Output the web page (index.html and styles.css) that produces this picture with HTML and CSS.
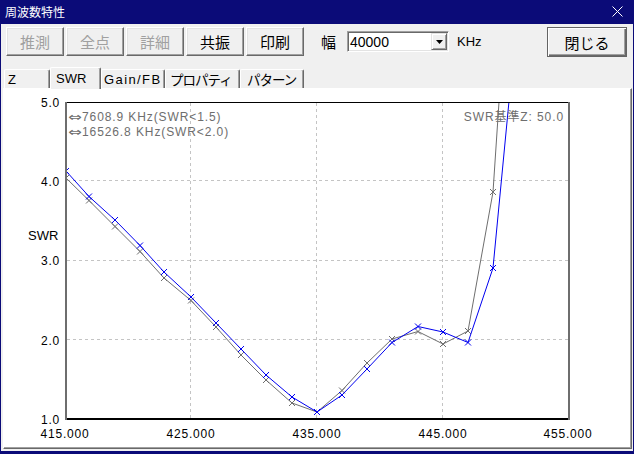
FILE: index.html
```html
<!DOCTYPE html>
<html lang="ja">
<head>
<meta charset="utf-8">
<title>周波数特性</title>
<link rel="stylesheet" href="styles.css">
</head>
<body>
<div class="window">
  <div class="titlebar">
    <span class="title">周波数特性</span>
    <svg class="close" width="11" height="11" viewBox="0 0 11 11"><path d="M0.5 0.5L10.5 10.5M10.5 0.5L0.5 10.5" stroke="#fff" stroke-width="1"/></svg>
  </div>
  <div class="client">
    <div class="toolbar">
      <button class="btn disabled">推測</button>
      <button class="btn disabled">全点</button>
      <button class="btn disabled">詳細</button>
      <button class="btn">共振</button>
      <button class="btn">印刷</button>
      <span class="label-width">幅</span>
      <div class="combo">
        <span class="combo-value">40000</span>
        <span class="combo-drop"><svg width="7" height="4" viewBox="0 0 7 4"><path d="M0 0H7L3.5 4Z" fill="#000"/></svg></span>
      </div>
      <span class="unit">KHz</span>
      <button class="btn btn-default">閉じる</button>
    </div>
    <div class="tabs">
      <div class="tab tab-z">Z</div>
      <div class="tab tab-swr active">SWR</div>
      <div class="tab tab-gain">Gain/FB</div>
      <div class="tab tab-prop jp">プロパティ</div>
      <div class="tab tab-pat jp">パターン</div>
    </div>
    <div class="panel">
      <div class="panel-inner">
        <svg class="chart" width="626" height="358" viewBox="4 89 626 358">
          <defs>
            <clipPath id="plot"><rect x="67" y="103" width="501" height="315"/></clipPath>
            <path id="xm" d="M-3 -3L3 3M-3 3L3 -3"/>
          </defs>
          <g class="grid">
            <line x1="67" y1="180.5" x2="568" y2="180.5"/>
            <line x1="67" y1="260.5" x2="568" y2="260.5"/>
            <line x1="67" y1="339.5" x2="568" y2="339.5"/>
            <line x1="190.5" y1="103" x2="190.5" y2="418"/>
            <line x1="316.5" y1="103" x2="316.5" y2="418"/>
            <line x1="442.5" y1="103" x2="442.5" y2="418"/>
          </g>
          <g class="frame">
            <rect x="65" y="102" width="505" height="1" fill="#000"/>
            <rect x="65" y="418" width="505" height="2" fill="#000"/>
            <rect x="65" y="102" width="2" height="318" fill="#6e6e6e"/>
            <rect x="568" y="102" width="2" height="318" fill="#6e6e6e"/>
          </g>
          <g clip-path="url(#plot)">
            <g class="series gray">
              <polyline points="66,178 89,200.5 115,226.5 140,251.5 164,278 191,300.5 216,327 241,355 266,380 292,403 317,412 342,390.5 367,363 392,339 418,331.5 443,344 468,331 493,192 519,-198"/>
              <use href="#xm" x="66" y="178"/><use href="#xm" x="89" y="200.5"/><use href="#xm" x="115" y="226.5"/><use href="#xm" x="140" y="251.5"/><use href="#xm" x="164" y="278"/><use href="#xm" x="191" y="300.5"/><use href="#xm" x="216" y="327"/><use href="#xm" x="241" y="355"/><use href="#xm" x="266" y="380"/><use href="#xm" x="292" y="403"/><use href="#xm" x="317" y="412"/><use href="#xm" x="342" y="390.5"/><use href="#xm" x="367" y="363"/><use href="#xm" x="392" y="339"/><use href="#xm" x="418" y="331.5"/><use href="#xm" x="443" y="344"/><use href="#xm" x="468" y="331"/><use href="#xm" x="493" y="192"/>
            </g>
            <g class="series blue">
              <polyline points="66,171 89,196.5 115,220 140,245.5 164,272 191,297 216,323 241,349 266,375 292,397 317,412 342,395 367,369 392,342.5 418,326.5 443,332 468,342.5 493,268 519,-3"/>
              <use href="#xm" x="66" y="171"/><use href="#xm" x="89" y="196.5"/><use href="#xm" x="115" y="220"/><use href="#xm" x="140" y="245.5"/><use href="#xm" x="164" y="272"/><use href="#xm" x="191" y="297"/><use href="#xm" x="216" y="323"/><use href="#xm" x="241" y="349"/><use href="#xm" x="266" y="375"/><use href="#xm" x="292" y="397"/><use href="#xm" x="317" y="412"/><use href="#xm" x="342" y="395"/><use href="#xm" x="367" y="369"/><use href="#xm" x="392" y="342.5"/><use href="#xm" x="418" y="326.5"/><use href="#xm" x="443" y="332"/><use href="#xm" x="468" y="342.5"/><use href="#xm" x="493" y="268"/>
            </g>
          </g>
          <g class="ylabels">
            <text x="60" y="107">5.0</text>
            <text x="60" y="186">4.0</text>
            <text x="60" y="265">3.0</text>
            <text x="60" y="344.5">2.0</text>
            <text x="60" y="424">1.0</text>
          </g>
          <text class="axis-title" x="28" y="240">SWR</text>
          <g class="xlabels">
            <text x="65" y="438">415.000</text>
            <text x="191" y="438">425.000</text>
            <text x="317" y="438">435.000</text>
            <text x="443" y="438">445.000</text>
            <text x="568" y="438">455.000</text>
          </g>
          <g class="notes">
            <text class="arrow" transform="translate(68 120.5) scale(1.35 1)">⇔</text>
            <text x="82" y="120.5">7608.9 KHz(SWR&lt;1.5)</text>
            <text class="arrow" transform="translate(68 135.5) scale(1.35 1)">⇔</text>
            <text x="82" y="135.5">16526.8 KHz(SWR&lt;2.0)</text>
            <text class="note-right" x="564" y="120.5">SWR基準Z: 50.0</text>
          </g>
        </svg>
      </div>
    </div>
  </div>
</div>
</body>
</html>
```

FILE: styles.css
```css
* { box-sizing: border-box; }
html, body { margin: 0; padding: 0; }
body {
  width: 634px;
  height: 454px;
  overflow: hidden;
  font-family: "Noto Sans CJK JP", sans-serif;
}
.window {
  width: 634px;
  height: 454px;
  background: #0b0b78;
  display: flex;
  flex-direction: column;
}
.titlebar {
  height: 24px;
  display: flex;
  align-items: center;
  padding-left: 5px;
  color: #fff;
  font-size: 12px;
}
.title { flex: 1; line-height: 1; margin-top: -1px; }
.close { margin-right: 11px; margin-top: -1px; }
.client {
  flex: 1;
  margin: 0 1px 3px 1px;
  background: #f0f0f0;
  display: flex;
  flex-direction: column;
}
.toolbar {
  height: 43px;
  display: flex;
  align-items: flex-start;
  padding: 3px 0 0 5px;
}
.btn {
  width: 58px;
  height: 29px;
  margin: 0 2px 0 0;
  padding: 0;
  font: 15px "Noto Sans CJK JP", sans-serif;
  line-height: 1;
  color: #000;
  background: #f0f0f0;
  border: 1px solid;
  border-color: #fff #696969 #696969 #fff;
  box-shadow: inset -1px -1px #a0a0a0, inset 1px 1px #e3e3e3;
  display: flex;
  align-items: center;
  justify-content: center;
}
.btn.disabled { color: #a0a0a0; }
.btn-default {
  width: 80px;
  height: 30px;
  margin: 0 6px 0 auto;
  border: 1px solid #646464;
  box-shadow: inset 1px 1px #fff, inset -1px -1px #696969, inset -2px -2px #a0a0a0;
}
.label-width {
  height: 29px;
  display: flex;
  align-items: center;
  margin-left: 15px;
  font-size: 15px;
  line-height: 1;
}
.combo {
  width: 102px;
  height: 21px;
  margin: 4px 0 0 11px;
  background: #fff;
  border: 1px solid;
  border-color: #a0a0a0 #fff #fff #a0a0a0;
  box-shadow: inset 1px 1px #696969, inset -1px -1px #e3e3e3;
  padding: 1px;
  display: flex;
}
.combo-value {
  flex: 1;
  display: flex;
  align-items: center;
  font: 14px "Liberation Sans", sans-serif;
  padding-left: 1px;
}
.combo-drop {
  width: 16px;
  background: #f0f0f0;
  border: 1px solid;
  border-color: #e3e3e3 #696969 #696969 #e3e3e3;
  box-shadow: inset 1px 1px #fff, inset -1px -1px #a0a0a0;
  display: flex;
  align-items: center;
  justify-content: center;
}
.combo-drop svg { display: block; }
.unit {
  height: 29px;
  display: flex;
  align-items: center;
  margin-left: 8px;
  font: 13px "Liberation Sans", sans-serif;
}
.tabs {
  height: 21px;
  margin-left: 3px;
  display: flex;
  align-items: flex-end;
  position: relative;
  z-index: 1;
}
.tab {
  height: 19px;
  background: #f0f0f0;
  border-top: 1px solid #fff;
  border-left: 1px solid #fff;
  border-right: 1px solid #696969;
  box-shadow: inset -1px 0 #a0a0a0;
  border-radius: 2px 2px 0 0;
  display: flex;
  align-items: center;
  font: 13px "Liberation Sans", "Noto Sans CJK JP", sans-serif;
  color: #000;
  white-space: nowrap;
}
.tab.active { height: 22px; margin-bottom: -1px; }
.tab.jp { font: 13.5px "Noto Sans CJK JP", sans-serif; letter-spacing: -1px; }
.tab-z { width: 46px; padding-left: 3px; }
.tab-swr { width: 51px; padding-left: 5px; }
.tab-gain { width: 64px; padding-left: 2px; letter-spacing: 1.4px; }
.tab-prop { width: 75px; padding-left: 4px; }
.tab-pat { width: 64px; padding-left: 6px; }
.panel {
  flex: 1;
  margin: 0 1px 2px 2px;
  border-top: 1px solid #fff;
  border-left: 1px solid #fff;
  border-right: 1px solid #696969;
  border-bottom: 1px solid #696969;
  display: flex;
}
.panel-inner {
  flex: 1;
  background: #fff;
  border-right: 1px solid #a0a0a0;
  border-bottom: 1px solid #a0a0a0;
}
.chart { display: block; }
.grid line { stroke: #c4c4c4; stroke-width: 1; stroke-dasharray: 3 3; }
.series polyline { fill: none; stroke-width: 1; }
.series use { fill: none; stroke-width: 1; }
.series.gray { stroke: #6e6e6e; }
.series.blue { stroke: #0000f0; }
.ylabels text { font: 12px "Liberation Sans", sans-serif; letter-spacing: 0.8px; text-anchor: end; fill: #000; }
.xlabels text { font: 12px "Liberation Sans", sans-serif; letter-spacing: 0.8px; text-anchor: middle; fill: #000; }
.axis-title { font: 13px "Liberation Sans", sans-serif; fill: #000; }
.notes text { font: 12px "Liberation Sans", "DejaVu Sans", "Noto Sans CJK JP", sans-serif; letter-spacing: 0.9px; fill: #6e6e6e; }
.notes .arrow { font-family: "DejaVu Sans", sans-serif; letter-spacing: 0; }
.notes .note-right { text-anchor: end; }
```
